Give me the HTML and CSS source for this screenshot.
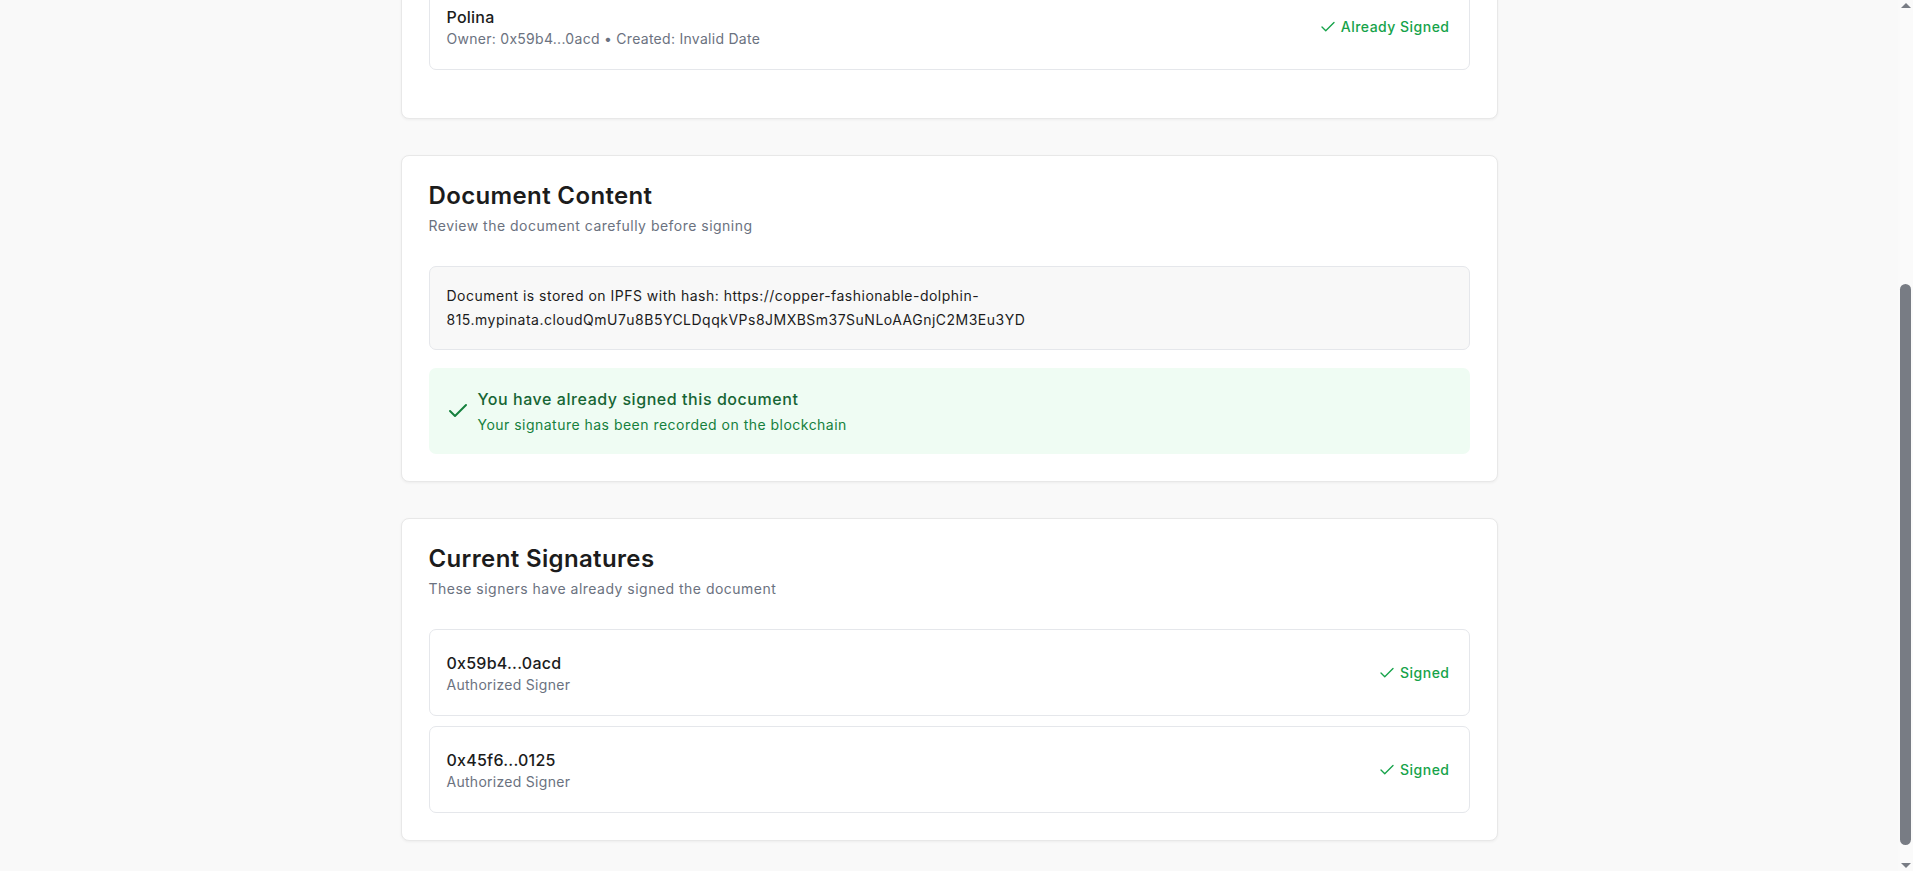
FILE: index.html
```html
<!DOCTYPE html>
<html lang="en">
<head>
<meta charset="utf-8">
<title>Sign Document</title>
<link rel="stylesheet" href="styles.css">
</head>
<body>
<main class="page">
  <section class="card">
    <header class="card-header">
      <h2 class="card-title">Document Details</h2>
      <p class="card-desc">Information about this document</p>
    </header>
    <div class="list list-loose">
      <div class="item">
        <div class="item-text">
          <div class="item-title">Polina</div>
          <div class="item-sub">Owner: 0x59b4...0acd • Created: Invalid Date</div>
        </div>
        <div class="status">
          <svg class="status-icon" viewBox="0 0 24 24" fill="none" stroke="currentColor" stroke-width="2" stroke-linecap="round" stroke-linejoin="round"><path d="M20 6 9 17l-5-5"/></svg>
          <span>Already Signed</span>
        </div>
      </div>
    </div>
  </section>

  <section class="card">
    <header class="card-header">
      <h2 class="card-title">Document Content</h2>
      <p class="card-desc">Review the document carefully before signing</p>
    </header>
    <div class="content-box">Document is stored on IPFS with hash: https://copper-fashionable-dolphin-815.mypinata.cloudQmU7u8B5YCLDqqkVPs8JMXBSm37SuNLoAAGnjC2M3Eu3YD</div>
    <div class="notice">
      <svg class="notice-icon" viewBox="0 0 24 24" fill="none" stroke="currentColor" stroke-width="2" stroke-linecap="round" stroke-linejoin="round"><path d="M20 6 9 17l-5-5"/></svg>
      <div class="notice-text">
        <div class="notice-title">You have already signed this document</div>
        <div class="notice-sub">Your signature has been recorded on the blockchain</div>
      </div>
    </div>
  </section>

  <section class="card">
    <header class="card-header">
      <h2 class="card-title">Current Signatures</h2>
      <p class="card-desc">These signers have already signed the document</p>
    </header>
    <div class="list">
      <div class="item">
        <div class="item-text">
          <div class="item-title">0x59b4...0acd</div>
          <div class="item-sub">Authorized Signer</div>
        </div>
        <div class="status">
          <svg class="status-icon" viewBox="0 0 24 24" fill="none" stroke="currentColor" stroke-width="2" stroke-linecap="round" stroke-linejoin="round"><path d="M20 6 9 17l-5-5"/></svg>
          <span>Signed</span>
        </div>
      </div>
      <div class="item">
        <div class="item-text">
          <div class="item-title">0x45f6...0125</div>
          <div class="item-sub">Authorized Signer</div>
        </div>
        <div class="status">
          <svg class="status-icon" viewBox="0 0 24 24" fill="none" stroke="currentColor" stroke-width="2" stroke-linecap="round" stroke-linejoin="round"><path d="M20 6 9 17l-5-5"/></svg>
          <span>Signed</span>
        </div>
      </div>
    </div>
  </section>
</main>

<div class="scrollbar" aria-hidden="true">
  <div class="sb-button"><span class="sb-arrow sb-arrow-up"></span></div>
  <div class="sb-track"><div class="sb-thumb"></div></div>
  <div class="sb-button"><span class="sb-arrow sb-arrow-down"></span></div>
</div>
<script src="script.js"></script>
</body>
</html>
```
FILE: styles.css
```css
* { box-sizing: border-box; }
html {
  scrollbar-width: none;
}
body {
  margin: 0;
  padding-right: 15px;
  background: #f9f9f9;
  font-family: Inter, "Noto Sans", Arial, sans-serif;
  color: #1c1c1c;
  letter-spacing: 0.03em;
}
.page {
  width: 1097px;
  margin: 0 auto;
  padding: 32px 0 30px;
  display: flex;
  flex-direction: column;
  gap: 36px;
}
.card {
  background: #fff;
  border: 1px solid #e8e8e8;
  border-radius: 8px;
  box-shadow: 0 1px 3px rgba(0, 0, 0, 0.05);
  padding: 26px 27px 27px;
}
.card-header {
  margin-bottom: 30px;
}
.card-title {
  margin: 0;
  font-size: 24px;
  line-height: 28px;
  font-weight: 600;
  letter-spacing: 0.015em;
  color: #1c1c1c;
}
.card-desc {
  margin: 6px 0 0;
  font-size: 14px;
  line-height: 20px;
  color: #6b7280;
}
.list {
  display: flex;
  flex-direction: column;
  gap: 10px;
}
.list-loose {
  padding-bottom: 21px;
}
.item {
  display: flex;
  align-items: center;
  justify-content: space-between;
  border: 1px solid #e5e7eb;
  border-radius: 7px;
  padding: 21px 19px 20px 17px;
}
.item-title {
  font-size: 16px;
  line-height: 24px;
  font-weight: 500;
  letter-spacing: 0.015em;
  color: #1c1c1c;
}
.item-sub {
  font-size: 14px;
  line-height: 20px;
  color: #6b7280;
  letter-spacing: 0.02em;
}
.status {
  display: flex;
  align-items: center;
  gap: 4px;
  color: #16a34a;
  font-size: 14px;
  line-height: 20px;
  font-weight: 500;
}
.status-icon {
  width: 18px;
  height: 18px;
  stroke-width: 1.8;
}
.content-box {
  background: #f8f8f8;
  border: 1px solid #e5e7eb;
  border-radius: 7px;
  padding: 17px 17px;
  font-size: 14px;
  line-height: 24px;
  color: #1c1c1c;
  letter-spacing: 0.035em;
}
.notice {
  margin-top: 18px;
  display: flex;
  align-items: center;
  gap: 8px;
  background: #effcf3;
  border-radius: 7px;
  padding: 19px 17px;
}
.notice-icon {
  width: 24px;
  height: 24px;
  color: #15803d;
  flex: none;
}
.notice-title {
  font-size: 16px;
  line-height: 24px;
  font-weight: 500;
  color: #166534;
  letter-spacing: 0.035em;
}
.notice-sub {
  margin-top: 4px;
  font-size: 14px;
  line-height: 20px;
  color: #15803d;
}

/* page scrollbar */
.scrollbar {
  position: fixed;
  top: 0;
  right: 0;
  bottom: 0;
  width: 15px;
  background: #fafafa;
  display: flex;
  flex-direction: column;
}
.sb-button {
  height: 15px;
  flex: none;
  display: flex;
  align-items: center;
  justify-content: center;
}
.sb-arrow {
  width: 0;
  height: 0;
  border-left: 5px solid transparent;
  border-right: 5px solid transparent;
}
.sb-arrow-up {
  border-bottom: 5px solid #787c84;
  margin-top: -4px;
}
.sb-arrow-down {
  border-top: 5px solid #787c84;
  margin-bottom: -4px;
}
.sb-track {
  flex: 1;
  padding: 269px 2px 0;
}
.sb-thumb {
  height: 561px;
  background: #787c84;
  border-radius: 6px;
}
```
FILE: script.js
```js
window.scrollTo(0, document.documentElement.scrollHeight);
```
